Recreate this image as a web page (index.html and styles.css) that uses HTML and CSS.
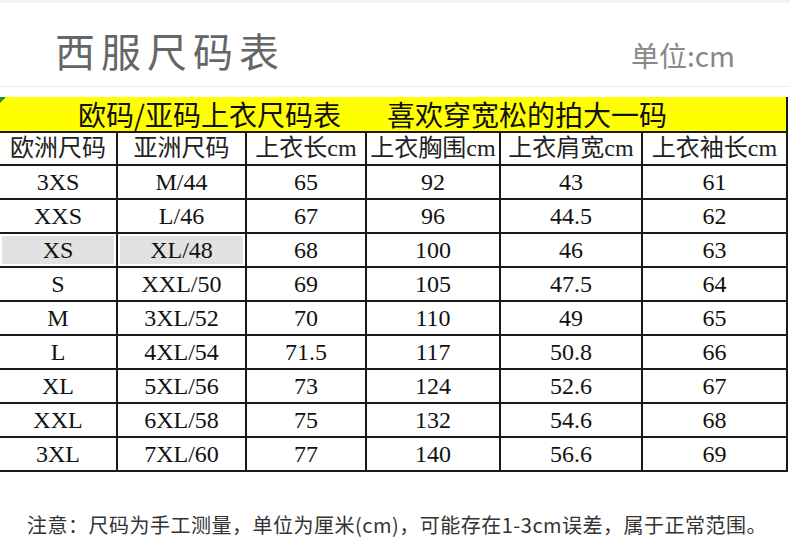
FILE: index.html
```html
<!DOCTYPE html>
<html lang="zh-CN">
<head>
<meta charset="utf-8">
<title>西服尺码表</title>
<link rel="stylesheet" href="styles.css">
</head>
<body>
<header class="top">
  <h1 class="title">西服尺码表</h1>
  <div class="unit">单位:cm</div>
</header>
<div class="tbl">
  <div class="cap"><span class="corner"></span><span>欧码/亚码上衣尺码表</span><span class="cap2">喜欢穿宽松的拍大一码</span></div>
  <div class="c h">欧洲尺码</div><div class="c h">亚洲尺码</div><div class="c h">上衣长cm</div><div class="c h">上衣胸围cm</div><div class="c h">上衣肩宽cm</div><div class="c h">上衣袖长cm</div>
  <div class="c">3XS</div><div class="c">M/44</div><div class="c">65</div><div class="c">92</div><div class="c">43</div><div class="c">61</div>
  <div class="c">XXS</div><div class="c">L/46</div><div class="c">67</div><div class="c">96</div><div class="c">44.5</div><div class="c">62</div>
  <div class="c hl">XS</div><div class="c hl">XL/48</div><div class="c">68</div><div class="c">100</div><div class="c">46</div><div class="c">63</div>
  <div class="c">S</div><div class="c">XXL/50</div><div class="c">69</div><div class="c">105</div><div class="c">47.5</div><div class="c">64</div>
  <div class="c">M</div><div class="c">3XL/52</div><div class="c">70</div><div class="c">110</div><div class="c">49</div><div class="c">65</div>
  <div class="c">L</div><div class="c">4XL/54</div><div class="c">71.5</div><div class="c">117</div><div class="c">50.8</div><div class="c">66</div>
  <div class="c">XL</div><div class="c">5XL/56</div><div class="c">73</div><div class="c">124</div><div class="c">52.6</div><div class="c">67</div>
  <div class="c">XXL</div><div class="c">6XL/58</div><div class="c">75</div><div class="c">132</div><div class="c">54.6</div><div class="c">68</div>
  <div class="c">3XL</div><div class="c">7XL/60</div><div class="c">77</div><div class="c">140</div><div class="c">56.6</div><div class="c">69</div>
</div>
<p class="note">注意：尺码为手工测量，单位为厘米(cm)，可能存在1-3cm误差，属于正常范围。</p>
</body>
</html>
```
FILE: styles.css
```css
html, body {
  margin: 0;
  padding: 0;
  background: #fff;
}
body {
  width: 790px;
  height: 550px;
  overflow: hidden;
  font-family: "Noto Sans CJK SC", "Noto Sans", sans-serif;
}
.top {
  box-sizing: border-box;
  height: 87px;
  border-top: 3px solid #f2f2f2;
  border-bottom: 1px solid #ebebeb;
  padding: 23px 55px 0 55px;
  display: flex;
  justify-content: space-between;
  align-items: baseline;
}
.title {
  margin: 0;
  font-weight: 400;
  font-size: 40px;
  line-height: 48px;
  letter-spacing: 6px;
  color: #666;
}
.unit {
  font-size: 28px;
  line-height: 48px;
  color: #888;
}
.tbl {
  margin-top: 10px;
  display: grid;
  grid-template-columns: 118px 129px 120px 134px 142px 145px;
  font-family: "Liberation Serif", "Noto Sans CJK SC", serif;
  color: #111;
}
.cap {
  grid-column: 1 / -1;
  position: relative;
  box-sizing: border-box;
  height: 36px;
  background: #ffff00;
  border-right: 2px solid #1a1a1a;
  border-bottom: 2px solid #1a1a1a;
  padding-left: 78px;
  display: flex;
  align-items: center;
  font-family: "Noto Sans CJK SC", sans-serif;
  font-size: 28px;
  line-height: 34px;
  color: #111;
}
.cap2 {
  margin-left: 46px;
}
.corner {
  position: absolute;
  left: 0;
  top: 0;
  width: 0;
  height: 0;
  border-top: 6px solid #2e8b2e;
  border-right: 6px solid transparent;
}
.c {
  box-sizing: border-box;
  height: 34px;
  border-right: 2px solid #1a1a1a;
  border-bottom: 2px solid #1a1a1a;
  text-align: center;
  font-size: 24px;
  line-height: 32px;
  white-space: nowrap;
}
.h {
  height: 33px;
  line-height: 31px;
  font-family: "Liberation Serif", "Noto Sans CJK SC", serif;
  font-size: 24px;
  color: #222;
}
.hl {
  background: #e2e2e2;
  box-shadow: inset 0 0 0 2px #fff;
}
.note {
  margin: 39px 0 0 0;
  padding-left: 27px;
  font-size: 20px;
  line-height: 28px;
  letter-spacing: 0.5px;
  color: #333;
}
```
